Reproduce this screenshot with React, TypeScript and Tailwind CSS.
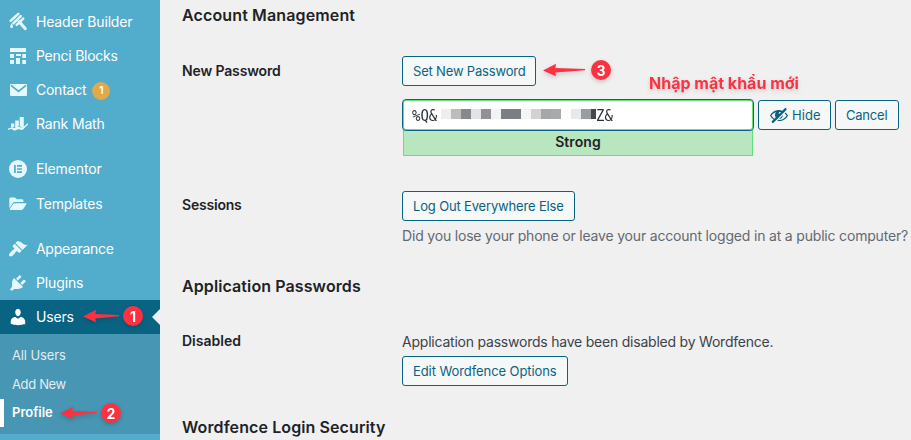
import type { ReactNode } from 'react';

const menuIcons: Record<string, ReactNode> = {
  header: (
    <g>
      <path d="M10.300 1.900 2.700 8.800M12.700 4.200 5.300 11.300M15.200 6.700 8.700 12.800" fill="none" stroke="currentColor" strokeWidth="2.500" strokeLinecap="round" />
      <path d="m11.200 9.800 6 6.700" stroke="currentColor" strokeWidth="3.200" strokeLinecap="round" />
      <path d="M3.500 11.500c-.7 1.200-1.400 2.200-1.400 3.100a1.500 1.500 0 0 0 3 0c0-.9-.8-1.900-1.600-3.100z" />
    </g>
  ),
  blocks: <path d="M2 2h16v4H2zM2 8h4v4H2zM8 8h5v2H8zM14.300 8H18v4h-3.700zM2 14h4v4H2zM8 12h4v6H8zM14.300 14H18v4h-3.700z" />,
  mail: (
    <g>
      <rect x="2" y="4" width="17" height="12" rx="1" />
      <path d="m3 5.400 7.500 6.100L18 5.400" fill="none" stroke="#52accc" strokeWidth="1.700" />
    </g>
  ),
  rank: (
    <g>
      <path d="M3 9.500h3.300v3.600L3 14zM7.200 6.500h3.600v5.800l-3.600 1.500zM11.700 3h4.100v9.400l-1.600 1-2.500-1.200z" />
      <path d="M.4 15.200c2.800-1.700 4.600-.9 6.800.2 2.300-1 3.200-2.500 5-1.500 2.200 1.100 3.900-.5 7.300-3.700" fill="none" stroke="currentColor" strokeWidth="1.300" strokeLinecap="round" />
      <path d="M4 15.800c2.500-2 5.500-4 8-2.400 1.800 1 3.500.6 5.500-1-1.800 3-3.600 4.200-5.300 3.200-1.600-.8-2.700-.2-4.400.7-1.400.6-2.600.2-3.800-.5z" />
    </g>
  ),
  elementor: (
    <g>
      <circle cx="10" cy="10" r="9" />
      <path d="M6 6h1.800v8H6zM9 6h5v1.700H9zM9 9.150h5v1.700H9zM9 12.300h5V14H9z" fill="#52accc" />
    </g>
  ),
  folder: (
    <g>
      <path d="M1.300 4.800c0-.8.6-1.400 1.400-1.400h4.200l1.900 1.900H14c.8 0 1.400.6 1.400 1.400v1.400H7c-1 0-1.700.4-2.200 1.200l-3.500 5z" />
      <path d="M7 9.200h10.900c.5 0 .8.5.5.9l-3.100 5c-.3.5-.8.8-1.400.8H2.300c-.5 0-.7-.4-.5-.8L5.200 10c.4-.5 1-.8 1.800-.8z" />
    </g>
  ),
  appearance: (
    <path d="M14.480 11.060L7.410 3.990l1.500-1.500c.5-.56 2.300-.47 3.510.32 1.210.8 1.430 1.280 2.910 2.100 1.180.64 2.450 1.260 4.450.85zm-.71.71L6.700 4.700 4.930 6.470c-.39.39-.39 1.020 0 1.410l1.060 1.060c.39.39.39 1.030 0 1.420-.6.6-1.430 1.110-2.210 1.690-.35.26-.7.53-1.010.84C1.430 14.230.4 16.080 1.400 17.070c.99 1 2.840-.03 4.180-1.360.31-.31.58-.66.85-1.020.57-.78 1.080-1.610 1.690-2.210.39-.39 1.020-.39 1.410 0l1.060 1.060c.39.39 1.020.39 1.410 0z" />
  ),
  plugins: (
    <path d="M13.110 4.360L9.870 7.600 8 5.730l3.240-3.240c.35-.34 1.050-.2 1.560.32.52.51.66 1.210.31 1.550zm-8 1.770l.91-1.120 9.010 9.010-1.190.84c-.71.71-2.630 1.160-3.820 1.160H6.140L4.900 17.260c-.59.59-1.540.59-2.120 0-.59-.58-.59-1.530 0-2.120l1.240-1.240v-3.880c0-1.130.4-3.190 1.090-3.890zm7.260 3.970l3.240-3.240c.34-.35 1.040-.21 1.550.31.52.51.66 1.210.31 1.550l-3.240 3.250z" />
  ),
  users: (
    <path d="M10 9.250c-2.270 0-2.730-3.440-2.730-3.440C7 4.020 7.820 2 9.970 2c2.160 0 2.980 2.020 2.710 3.810 0 0-.41 3.440-2.680 3.440zm0 2.570L12.720 10c2.390 0 4.520 2.330 4.520 4.530v2.490s-3.650 1.130-7.240 1.130c-3.650 0-7.240-1.130-7.240-1.130v-2.490c0-2.250 1.940-4.480 4.470-4.480z" />
  ),
};

function MenuItem({ icon, label, tracking, badge, active }: { icon: string; label: string; tracking: string; badge?: string; active?: boolean }) {
  return (
    <li className={`relative flex h-[34px] items-center pl-2 text-sm ${active ? 'bg-[#096484] text-white' : 'text-white'}`}>
      <svg viewBox="0 0 20 20" className={`size-5 shrink-0 ${active ? 'text-white' : 'text-[#e5f8ff]'}`} fill="currentColor">
        {menuIcons[icon]}
      </svg>
      <span className={`ml-2 ${tracking}`}>{label}</span>
      {badge && (
        <span className="ml-[6px] mt-0.5 flex size-[18px] items-center justify-center rounded-full bg-[#e1a948] text-[11px] font-semibold">{badge}</span>
      )}
      {active && <span className="absolute right-0 top-[9px] border-y-8 border-r-8 border-y-transparent border-r-[#f0f0f1]" />}
    </li>
  );
}

function Button({ children, className }: { children: ReactNode; className: string }) {
  return (
    <button className={`flex h-[30px] shrink-0 items-center rounded-[3px] border border-[#096484] bg-[#f6f7f7] pt-px pl-[10px] text-[13px] whitespace-nowrap text-[#096484] ${className}`}>
      {children}
    </button>
  );
}

function Marker({ n, className, length }: { n: number; className: string; length: number }) {
  return (
    <div className={`absolute flex h-5 items-center justify-between drop-shadow-[0_2px_2px_rgba(0,0,0,0.18)] ${className}`}>
      <svg width={length} height="14" viewBox={`0 0 ${length} 14`} fill="#fc3141">
        <path d={`M0 7.400 13 .8 12.300 5 ${length - 1} 6v1.300L12.300 9.500 13 13.200z`} />
      </svg>
      <span className="flex size-5 items-center justify-center rounded-full bg-[#fc3141] text-[14px] font-bold text-white">{n}</span>
    </div>
  );
}

const mosaic: [string, string][] = [
  ['w-[10px]', 'bg-[#eeeeee]'],
  ['w-[10px]', 'bg-[#bcbcbd]'],
  ['w-[10px]', 'bg-[#86888b]'],
  ['w-[10px]', 'bg-[#e2e3e4]'],
  ['w-[10px]', 'bg-[#8f9194]'],
  ['w-[10px]', 'bg-[#f3f3f3]'],
  ['w-[20px]', 'bg-[#7b7e82]'],
  ['w-[10px]', 'bg-[#f5f5f5]'],
  ['w-[10px]', 'bg-[#d1d2d3]'],
  ['w-[10px]', 'bg-[#a4a6a8]'],
  ['w-[10px]', 'bg-[#a8aaac]'],
  ['w-[10px]', 'bg-[#fdfdfd]'],
  ['w-[10px]', 'bg-[#e7e9e9]'],
  ['w-[10px]', 'bg-[#9a9da0]'],
  ['w-[5px]', 'bg-[#44484c]'],
];

export default function App() {
  return (
    <div className="relative flex h-[440px] w-[911px] overflow-hidden bg-[#f0f0f1] font-['Inter',sans-serif] text-[#3c434a]">
      <aside className="w-40 shrink-0 bg-[#52accc] pt-[5px]">
        <ul>
          <MenuItem icon="header" label="Header Builder" tracking="tracking-[-0.17px]" />
          <MenuItem icon="blocks" label="Penci Blocks" tracking="tracking-[-0.25px]" />
          <MenuItem icon="mail" label="Contact" tracking="tracking-[-0.25px]" badge="1" />
          <MenuItem icon="rank" label="Rank Math" tracking="tracking-[-0.16px]" />
        </ul>
        <ul className="mt-[11px] flex flex-col gap-px">
          <MenuItem icon="elementor" label="Elementor" tracking="tracking-[-0.12px]" />
          <MenuItem icon="folder" label="Templates" tracking="tracking-[-0.2px]" />
        </ul>
        <ul className="mt-[11px]">
          <MenuItem icon="appearance" label="Appearance" tracking="tracking-[-0.3px]" />
          <MenuItem icon="plugins" label="Plugins" tracking="tracking-[-0.14px]" />
          <MenuItem icon="users" label="Users" tracking="tracking-[-0.18px]" active />
        </ul>
        <ul className="h-[100px] bg-[#4796b3] pt-[8px] text-[13px] text-[#e2ecf1]">
          <li className="flex h-[28px] items-center pl-3 tracking-[-0.13px]">All Users</li>
          <li className="flex h-[29px] items-center pl-3 tracking-[-0.35px]">Add New</li>
          <li className="flex h-[28px] items-center border-l-4 border-white pl-2 font-semibold tracking-[0px] text-white">Profile</li>
        </ul>
      </aside>

      <main className="flex-1 pl-[22px] pt-[3px] whitespace-nowrap">
        <h2 className="h-6 text-base leading-6 font-semibold tracking-[0.13px] text-[#1d2327]">Account Management</h2>
        <div className="mt-[29px] flex">
          <div className="w-[220px] shrink-0 pt-[5px] text-sm font-semibold tracking-[-0.14px] text-[#1d2327]">New Password</div>
          <div>
            <Button className="w-[134px] tracking-[-0.18px]">Set New Password</Button>
            <div className="mt-[13px] flex gap-1">
              <div className="w-[352px]">
                <div className="relative z-10 flex h-[32px] items-center rounded-[4px] border border-[#096484] bg-white shadow-[inset_0_0_0_1px_#68de7c]">
                  <span className="w-[30px] scale-y-115 pl-[9px] font-['DejaVu_Sans_Mono',monospace] text-[14px] text-[#2c3338]">%Q&amp;</span>
                  <span className="ml-2 -mt-0.5 flex h-[10px]">
                    {mosaic.map(([w, c], i) => (
                      <span key={i} className={`${w} ${c}`} />
                    ))}
                  </span>
                  <span className="scale-y-115 font-['DejaVu_Sans_Mono',monospace] text-[14px] text-[#2c3338]">Z&amp;</span>
                </div>
                <div className="ml-px -mt-px flex h-[26px] w-[350px] items-center justify-center border border-[#68de7c] bg-[#b8e6bf] pb-[3px] text-sm font-semibold tracking-[0.1px] text-[#1d2327]">Strong</div>
              </div>
              <Button className="mt-px w-[73px] gap-1">
                <svg viewBox="0 0 20 20" className="-mt-px size-5 shrink-0" fill="currentColor">
                  <path d="M17.200 3.300l.16.17c.39.39.39 1.020 0 1.410L4.550 17.700c-.39.39-1.030.39-1.410 0l-.17-.17c-.39-.39-.39-1.020 0-1.410l1.590-1.600c-1.570-1-2.760-2.300-3.560-3.930.81-1.650 2.030-2.980 3.640-3.990S8.040 5.090 10 5.090c1.200 0 2.330.21 3.400.6l2.380-2.390c.39-.39 1.030-.39 1.420 0zm-7.090 4.010c-.23.25-.34.54-.34.88 0 .31.12.58.31.81l1.800-1.790c-.13-.12-.28-.21-.45-.26-.11-.01-.28-.03-.49-.04-.33.03-.6.16-.83.4zM2.400 10.590c.69 1.230 1.710 2.250 3.050 3.050l1.280-1.280c-.51-.69-.77-1.470-.77-2.360 0-1.060.36-1.980 1.090-2.760-1.040.27-1.960.7-2.760 1.260-.8.58-1.430 1.270-1.890 2.090zm13.220-2.130l.96-.96c1.020.86 1.830 1.890 2.420 3.090-.81 1.650-2.030 2.980-3.640 3.990s-3.400 1.510-5.360 1.510c-.63 0-1.240-.07-1.830-.18l1.070-1.070c.25.02.5.05.76.05 1.630 0 3.130-.4 4.500-1.210s2.400-1.840 3.100-3.100c-.46-.82-1.090-1.510-1.890-2.090-.03-.01-.06-.02-.09-.03zm-5.580 5.580l4-4c-.01 1.100-.41 2.040-1.180 2.810-.78.78-1.720 1.180-2.820 1.190z" />
                </svg>
                <span className="-ml-px tracking-[0.1px]">Hide</span>
              </Button>
              <Button className="mt-px w-[64px] tracking-[-0.22px]">Cancel</Button>
            </div>
          </div>
        </div>

        <div className="mt-[35px] flex">
          <div className="w-[220px] shrink-0 pt-[4px] text-sm font-semibold tracking-[-0.2px] text-[#1d2327]">Sessions</div>
          <div>
            <Button className="w-[173px] tracking-[-0.16px]">Log Out Everywhere Else</Button>
            <p className="mt-[5px] text-sm tracking-[-0.183px] text-[#646970]">Did you lose your phone or leave your account logged in at a public computer?</p>
          </div>
        </div>

        <h2 className="mt-[28px] h-6 text-base leading-6 font-semibold tracking-[0.1px] text-[#1d2327]">Application Passwords</h2>
        <div className="mt-[34px] flex">
          <div className="w-[220px] shrink-0 -mt-px text-sm font-semibold tracking-[0px] text-[#1d2327]">Disabled</div>
          <div>
            <p className="text-sm tracking-[-0.22px]">Application passwords have been disabled by Wordfence.</p>
            <Button className="mt-[4px] w-[166px] tracking-[-0.08px]">Edit Wordfence Options</Button>
          </div>
        </div>
        <h2 className="mt-[29px] h-6 text-base leading-6 font-semibold tracking-[0.1px] text-[#1d2327]">Wordfence Login Security</h2>
      </main>

      <Marker n={1} length={37} className="left-[83px] top-[306px] w-[60px]" />
      <Marker n={2} length={38} className="left-[60px] top-[403px] w-[61px]" />
      <Marker n={3} length={43} className="left-[543px] top-[60px] w-[68px]" />
      <Marker n={4} length={42} className="left-[625px] top-[103px] w-[74px]" />
      <span className="absolute left-[649px] top-[71px] text-base font-bold whitespace-nowrap text-[#fc3141] drop-shadow-[0_2px_2px_rgba(0,0,0,0.15)]">Nhập mật khẩu mới</span>
    </div>
  );
}
